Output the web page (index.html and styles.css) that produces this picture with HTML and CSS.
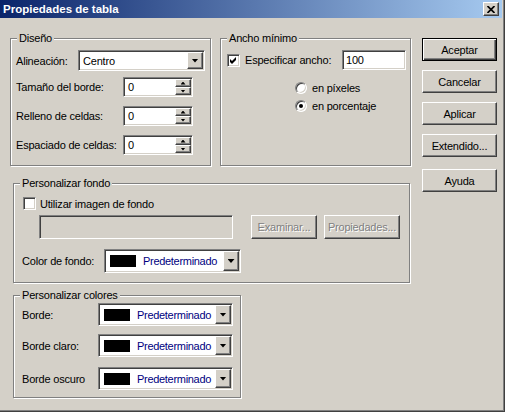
FILE: index.html
```html
<!DOCTYPE html>
<html lang="es">
<head>
<meta charset="utf-8">
<title>Propiedades de tabla</title>
<link rel="stylesheet" href="styles.css">
</head>
<body>
<div class="window">
  <div class="titlebar">
    <span class="title">Propiedades de tabla</span>
    <span class="close raised">
      <svg width="8" height="7" viewBox="0 0 8 7"><path d="M0.5 0L7.5 7M7.5 0L0.5 7" stroke="#000" stroke-width="1.7" fill="none"/></svg>
    </span>
  </div>
  <div class="client">
    <div class="main">
      <div class="toprow">
        <div class="group g-diseno">
          <span class="legend">Diseño</span>
          <div class="row r-align">
            <span class="lbl w-align">Alineación:</span>
            <div class="field combo c-align"><span class="combo-text">Centro</span><span class="drop raised"><i class="arrow"></i></span></div>
          </div>
          <div class="row r-spin r-spin1">
            <span class="lbl w-spin">Tamaño del borde:</span>
            <div class="field spin"><span class="spin-val">0</span><span class="spin-btns"><span class="sb raised"><i class="sarrow up"></i></span><span class="sb raised"><i class="sarrow"></i></span></span></div>
          </div>
          <div class="row r-spin">
            <span class="lbl w-spin">Relleno de celdas:</span>
            <div class="field spin"><span class="spin-val">0</span><span class="spin-btns"><span class="sb raised"><i class="sarrow up"></i></span><span class="sb raised"><i class="sarrow"></i></span></span></div>
          </div>
          <div class="row r-spin">
            <span class="lbl w-spin">Espaciado de celdas:</span>
            <div class="field spin"><span class="spin-val">0</span><span class="spin-btns"><span class="sb raised"><i class="sarrow up"></i></span><span class="sb raised"><i class="sarrow"></i></span></span></div>
          </div>
        </div>
        <div class="group g-ancho">
          <span class="legend">Ancho mínimo</span>
          <div class="row r-width">
            <span class="field check">
              <svg width="9" height="9" viewBox="0 0 9 9"><path d="M1 3L3 5L7 1V4L3 8L1 6Z" fill="#000"/></svg>
            </span>
            <span class="lbl chk-lbl">Especificar ancho:</span>
            <div class="field edit e-width">100</div>
          </div>
          <div class="radios">
            <div class="row r-radio"><span class="radio"></span><span class="lbl radio-lbl">en píxeles</span></div>
            <div class="row r-radio"><span class="radio on"></span><span class="lbl radio-lbl">en porcentaje</span></div>
          </div>
        </div>
      </div>

      <div class="group g-fondo">
        <span class="legend">Personalizar fondo</span>
        <div class="row r-bgimg">
          <span class="field check c-bgimg"></span>
          <span class="lbl chk-lbl2">Utilizar imagen de fondo</span>
        </div>
        <div class="row r-path">
          <div class="field edit disabled e-path"></div>
          <span class="btn disabled b-browse">Examinar...</span>
          <span class="btn disabled b-props">Propiedades...</span>
        </div>
        <div class="row r-bgcolor">
          <span class="lbl w-bgcolor">Color de fondo:</span>
          <div class="field combo c-color c-bg"><span class="swatch"></span><span class="color-text">Predeterminado</span><span class="drop raised"><i class="arrow"></i></span></div>
        </div>
      </div>

      <div class="group g-colores">
        <span class="legend">Personalizar colores</span>
        <div class="row r-col r-col1">
          <span class="lbl w-col">Borde:</span>
          <div class="field combo c-color c-cl"><span class="swatch"></span><span class="color-text">Predeterminado</span><span class="drop raised"><i class="arrow"></i></span></div>
        </div>
        <div class="row r-col r-col2">
          <span class="lbl w-col">Borde claro:</span>
          <div class="field combo c-color c-cl"><span class="swatch"></span><span class="color-text">Predeterminado</span><span class="drop raised"><i class="arrow"></i></span></div>
        </div>
        <div class="row r-col r-col3">
          <span class="lbl w-col">Borde oscuro</span>
          <div class="field combo c-color c-cl"><span class="swatch"></span><span class="color-text">Predeterminado</span><span class="drop raised"><i class="arrow"></i></span></div>
        </div>
      </div>
    </div>

    <div class="buttons">
      <span class="btn default">Aceptar</span>
      <span class="btn">Cancelar</span>
      <span class="btn">Aplicar</span>
      <span class="btn">Extendido...</span>
      <span class="btn b-help">Ayuda</span>
    </div>
  </div>
</div>
</body>
</html>
```

FILE: styles.css
```css
* { box-sizing: border-box; }

body {
  margin: 0;
  background: #d4d0c8;
  font-family: "Liberation Sans", Arial, sans-serif;
  font-size: 11px;
  letter-spacing: -0.2px;
  color: #000;
}

/* dialog frame: only the right and bottom edges are visible */
.window {
  width: 505px;
  height: 412px;
  padding: 0 3px 3px 0;
  background: #d4d0c8;
  box-shadow: inset -1px -1px #404040, inset -2px -2px #808080;
}

.titlebar {
  height: 18px;
  display: flex;
  align-items: center;
  justify-content: space-between;
  padding: 0 3px 0 3px;
  background: linear-gradient(to right, #0a246a, #a6caf0);
  color: #fff;
  font-weight: bold;
  font-size: 11.5px;
  letter-spacing: 0;
}

.close {
  width: 16px;
  height: 14px;
  display: flex;
  align-items: center;
  justify-content: center;
}

/* 3D bevels */
.raised {
  background: #d4d0c8;
  border: 1px solid;
  border-color: #fff #404040 #404040 #fff;
  box-shadow: inset -1px -1px #808080;
}

.field {
  background: #fff;
  border: 1px solid;
  border-color: #808080 #fff #fff #808080;
  box-shadow: inset 1px 1px #404040, inset -1px -1px #d4d0c8;
}

.client {
  display: flex;
  padding: 20px 0 0 10px;
}

.main { width: 412px; }

.toprow {
  display: flex;
  gap: 9px;
}

/* etched group box */
.group {
  border: 1px solid #808080;
  box-shadow: inset 1px 1px #fff, 1px 1px #fff;
  padding: 0 5px;
}

.legend {
  display: block;
  width: max-content;
  margin: -7px 0 0 1px;
  padding: 0 2px;
  background: #d4d0c8;
  line-height: 13px;
}

.row {
  display: flex;
  align-items: center;
}

.lbl {
  flex: none;
  white-space: nowrap;
}

/* Diseño */
.g-diseno { width: 201px; height: 128px; }
.r-align { margin-top: 5px; height: 21px; }
.w-align { width: 62px; }
.c-align { width: 127px; height: 21px; }
.combo {
  display: flex;
  align-items: center;
  padding: 1px;
}
.combo-text { margin-left: 3px; }
.drop {
  margin-left: auto;
  width: 16px;
  align-self: stretch;
  display: flex;
  align-items: center;
  justify-content: center;
}
.arrow {
  display: block;
  width: 7px;
  height: 4px;
  background: #000;
  clip-path: polygon(0 0, 100% 0, 50% 100%);
}

.r-spin { margin-top: 9px; height: 20px; }
.r-spin1 { margin-top: 6px; }
.w-spin { width: 107px; }
.spin {
  width: 70px;
  height: 20px;
  display: flex;
  padding: 1px;
}
.spin-val { margin-left: 3px; line-height: 16px; }
.spin-btns {
  margin-left: auto;
  width: 16px;
  display: flex;
  flex-direction: column;
}
.sb {
  flex: 1;
  display: flex;
  align-items: center;
  justify-content: center;
}
.sarrow {
  display: block;
  width: 5px;
  height: 3px;
  background: #000;
  clip-path: polygon(0 0, 100% 0, 50% 100%);
}
.sarrow.up { clip-path: polygon(50% 0, 100% 100%, 0 100%); }

/* Ancho mínimo */
.g-ancho { width: 191px; height: 128px; padding-right: 4px; }
.r-width { margin-top: 5px; height: 20px; }
.check {
  flex: none;
  width: 13px;
  height: 13px;
  margin-left: 1px;
  display: flex;
  align-items: center;
  justify-content: center;
}
.chk-lbl { margin-left: 5px; }
.edit {
  height: 20px;
  padding: 0 0 0 3px;
  line-height: 18px;
}
.e-width { width: 64px; margin-left: auto; }

.radios { margin: 9px 0 0 69px; }
.r-radio { height: 18px; }
.radio {
  flex: none;
  width: 12px;
  height: 12px;
  border-radius: 50%;
  background: #fff;
  border: 1px solid;
  border-color: #808080 #fff #fff #808080;
  box-shadow: inset 1px 1px #404040, inset -1px -1px #d4d0c8;
  display: flex;
  align-items: center;
  justify-content: center;
}
.radio.on::after {
  content: "";
  width: 4px;
  height: 4px;
  border-radius: 50%;
  background: #000;
}
.radio-lbl { margin-left: 5px; }

/* Personalizar fondo */
.g-fondo { margin: 17px 0 0 3px; width: 397px; height: 100px; }
.r-bgimg { margin-top: 5px; height: 17px; }
.c-bgimg { margin-left: 4px; }
.chk-lbl2 { margin-left: 4px; }
.r-path { margin: 3px 0 0 20px; height: 24px; }
.e-path { width: 194px; height: 24px; }
.disabled.field { background: #d4d0c8; }
.r-bgcolor { margin-top: 10px; height: 24px; }
.w-bgcolor { width: 82px; margin-left: 3px; }
.c-bg { width: 137px; height: 24px; }

.swatch {
  flex: none;
  width: 26px;
  height: 12px;
  margin-left: 4px;
  background: #000;
}
.color-text { margin-left: 7px; color: #000080; letter-spacing: -0.3px; }

/* Personalizar colores */
.g-colores { margin: 12px 0 0 3px; width: 228px; height: 103px; }
.r-col { height: 23px; }
.r-col1 { margin-top: 1px; }
.r-col2 { margin-top: 8px; }
.r-col3 { margin-top: 10px; }
.w-col { width: 76px; margin-left: 3px; }
.c-cl { width: 135px; height: 23px; }

/* push buttons */
.btn {
  display: flex;
  align-items: center;
  justify-content: center;
  height: 23px;
  background: #d4d0c8;
  border: 1px solid;
  border-color: #fff #404040 #404040 #fff;
  box-shadow: inset -1px -1px #808080;
  white-space: nowrap;
}
.btn.default {
  border: 1px solid #000;
  box-shadow: inset 1px 1px #fff, inset -1px -1px #404040, inset -2px -2px #808080;
}
.btn.disabled {
  color: #808080;
  text-shadow: 1px 1px #fff;
}
.b-browse { width: 66px; margin-left: 18px; height: 24px; }
.b-props { width: 76px; margin-left: 7px; height: 24px; }

.buttons {
  width: 75px;
  display: flex;
  flex-direction: column;
  gap: 9px;
}
.b-help { margin-top: 3px; }
```
